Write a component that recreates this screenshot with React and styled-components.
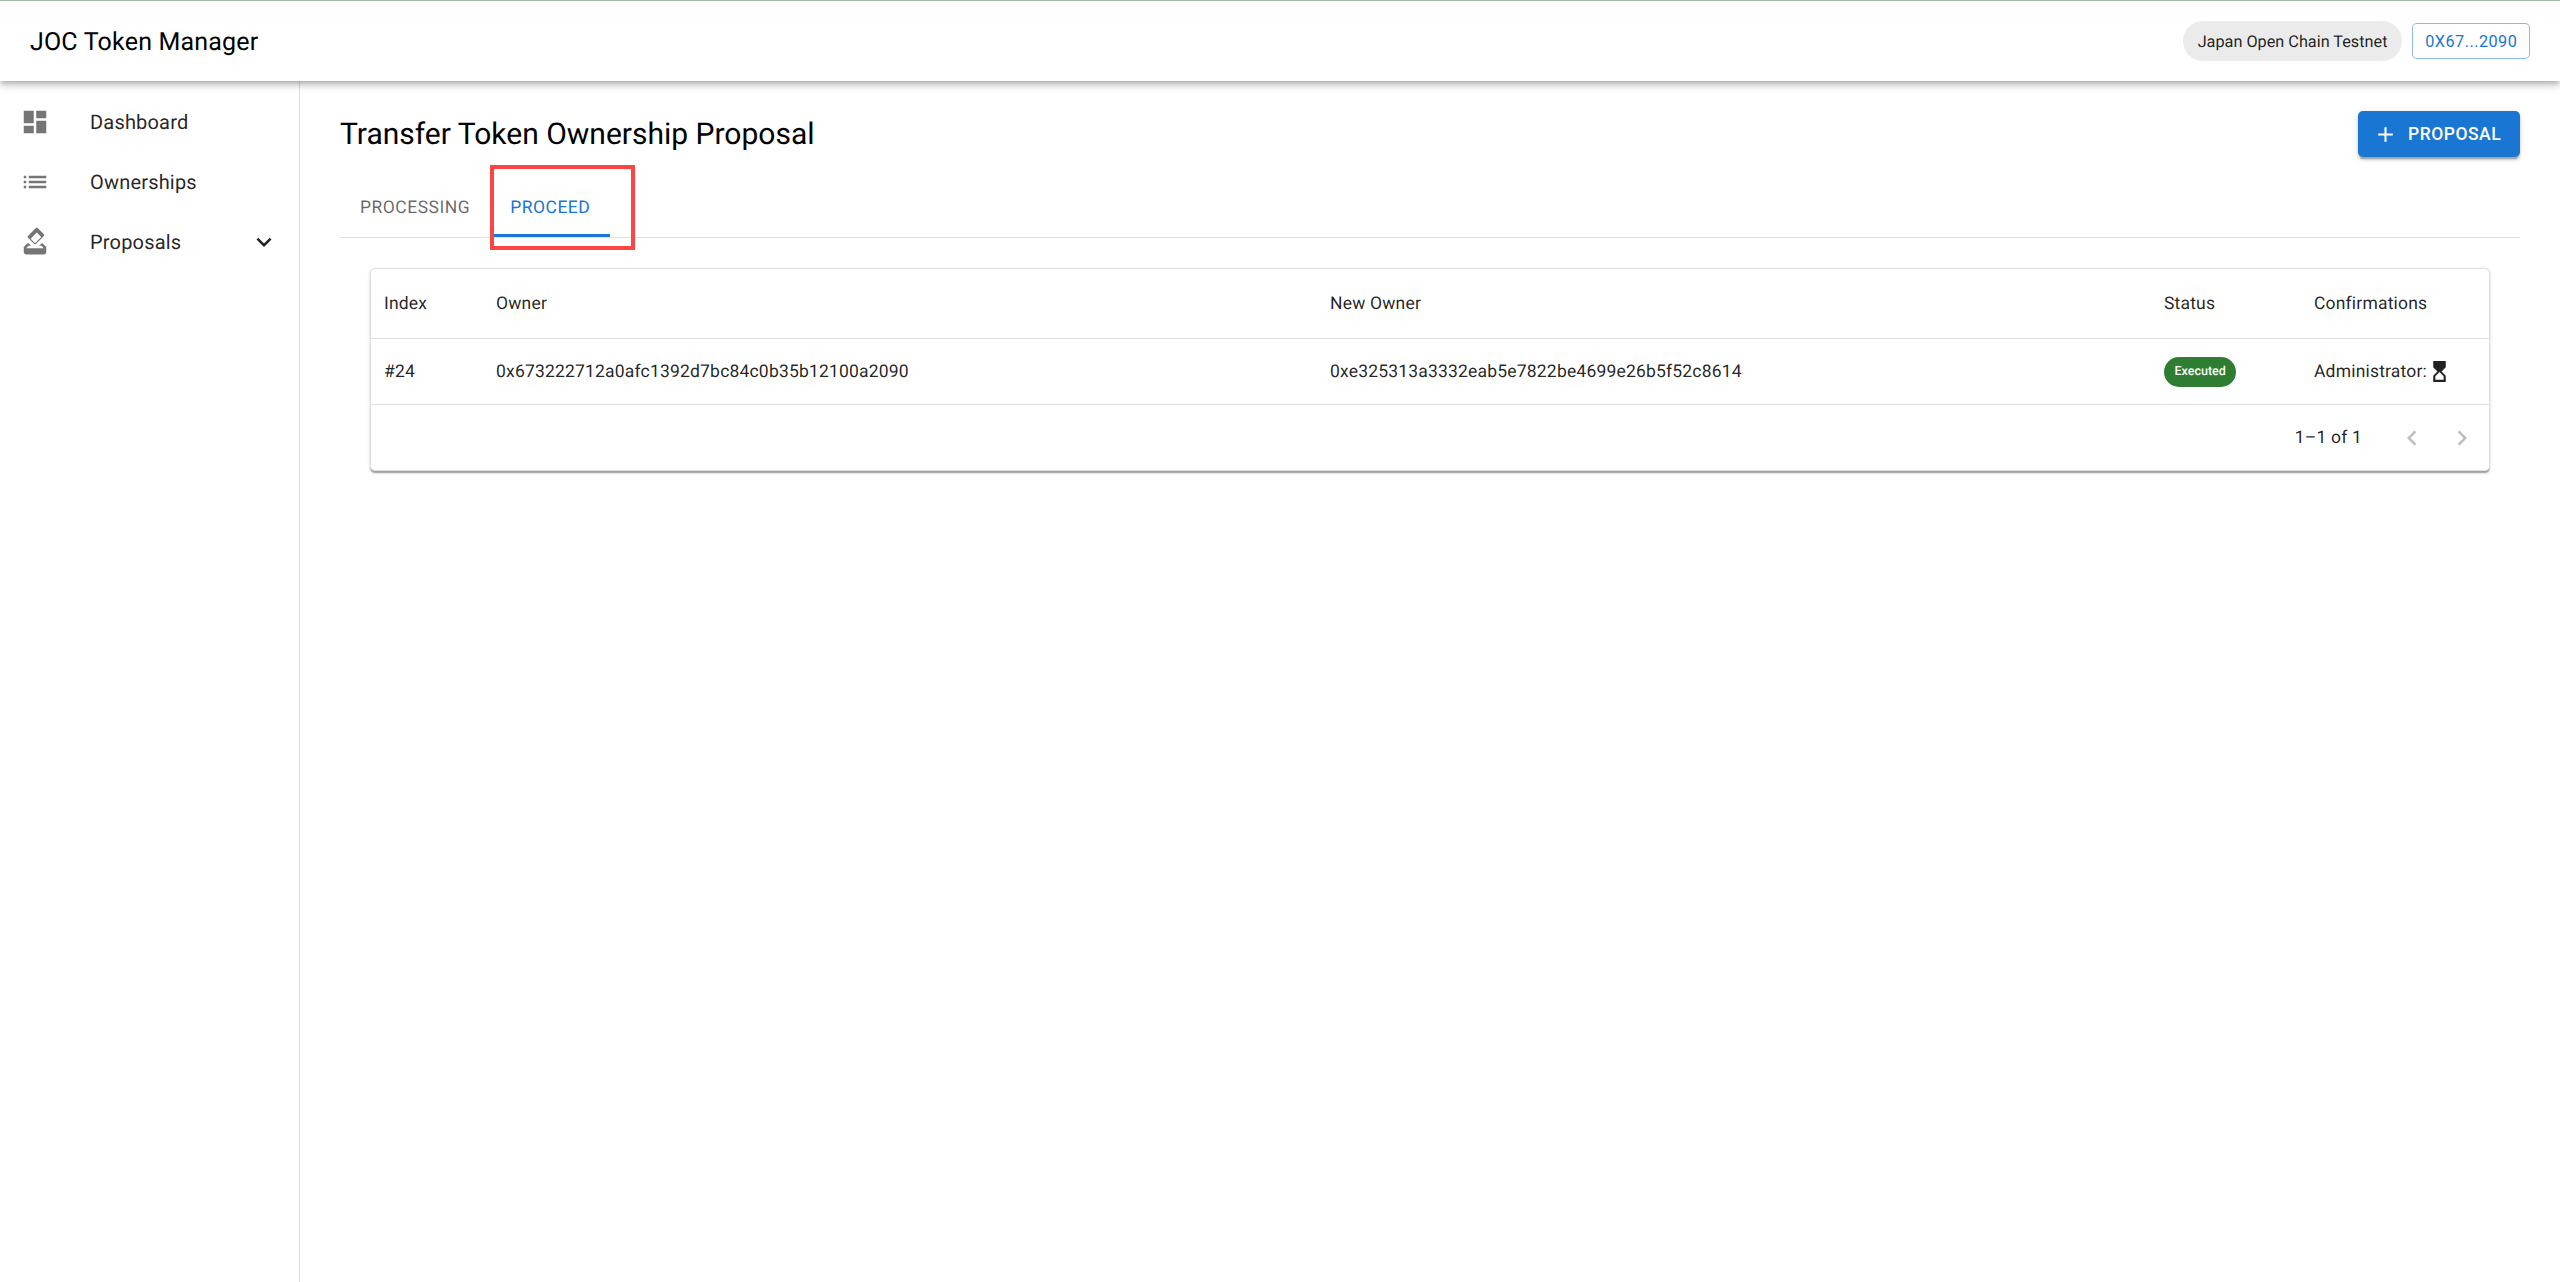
import React from "react";
import styled, { createGlobalStyle } from "styled-components";

const Global = createGlobalStyle`
  html, body { margin: 0; padding: 0; background: #fff; height: 100%; }
  body { font-family: Roboto, "Liberation Sans", sans-serif; color: rgba(0,0,0,.87); text-rendering: geometricPrecision; }
  #root { height: 1282px; overflow: hidden; }
`;

const Page = styled.div`
  display: flex;
  flex-direction: column;
  height: 1282px;
`;
const TopBar = styled.header`
  position: relative;
  z-index: 2;
  height: 81px;
  box-sizing: border-box;
  border-top: 1px solid #a3bda3;
  padding: 0 30px;
  display: flex;
  align-items: center;
  justify-content: space-between;
  background: #fff;
  box-shadow: 0 2.5px 5px -1.25px rgba(0,0,0,.2), 0 5px 6px 0 rgba(0,0,0,.14), 0 1.25px 12px 0 rgba(0,0,0,.12);
`;
const AppTitle = styled.h1`
  margin: 2px 0 0;
  font-size: 25px;
  font-weight: 400;
  letter-spacing: .1875px;
  color: #000;
`;
const TopActions = styled.div`
  display: flex;
  align-items: center;
  gap: 10px;
`;
const NetworkChip = styled.div`
  height: 40px;
  padding: 0 15px;
  border-radius: 20px;
  background: #ebebeb;
  display: flex;
  align-items: center;
  font-size: 16.25px;
`;
const WalletButton = styled.button`
  height: 36px;
  padding: 0 11.75px;
  background: #fff;
  border: 1px solid rgba(25,118,210,.5);
  border-radius: 5px;
  color: #1976d2;
  font: 400 16.25px Roboto, sans-serif;
  letter-spacing: .46px;
  text-transform: uppercase;
`;
const Body = styled.div`
  flex: 1;
  display: flex;
  min-height: 0;
`;
const Sidebar = styled.nav`
  width: 300px;
  box-sizing: border-box;
  border-right: 1px solid #dedede;
  padding-top: 11px;
  flex: none;
`;
const NavItem = styled.div`
  height: 60px;
  padding: 0 20px;
  display: flex;
  align-items: center;
  font-size: 20px;
  letter-spacing: .1875px;
`;
const NavIcon = styled.svg`
  width: 30px;
  height: 30px;
  flex: none;
  margin-right: 40px;
  fill: rgba(0,0,0,.54);
`;
const NavLabel = styled.span`
  flex: 1;
`;
const Chevron = styled.svg`
  width: 30px;
  height: 30px;
  fill: rgba(0,0,0,.87);
`;
const Main = styled.main`
  flex: 1;
  min-width: 0;
  padding: 30px 40px 0;
`;
const HeadRow = styled.div`
  display: flex;
  align-items: center;
  justify-content: space-between;
  height: 46px;
`;
const PageTitle = styled.h2`
  margin: 0;
  font-size: 30px;
  font-weight: 400;
  color: #000;
`;
const PrimaryButton = styled.button`
  height: 46px;
  width: 162px;
  padding: 0 15px;
  border: 0;
  border-radius: 5px;
  background: #1976d2;
  color: #fff;
  display: flex;
  align-items: center;
  font: 500 17.5px Roboto, sans-serif;
  letter-spacing: .5px;
  box-shadow: 0 3.75px 1.25px -2.5px rgba(0,0,0,.2), 0 2.5px 2.5px 0 rgba(0,0,0,.14), 0 1.25px 6px 0 rgba(0,0,0,.12);
`;
const PlusIcon = styled.svg`
  width: 25px;
  height: 25px;
  margin-right: 10px;
  fill: #fff;
  flex: none;
`;
const TabBar = styled.div`
  position: relative;
  margin-top: 21px;
  height: 60px;
  display: flex;
  border-bottom: 1px solid #e0e0e0;
  box-sizing: border-box;
`;
const Tab = styled.div`
  position: relative;
  padding: 0 20px;
  display: flex;
  align-items: center;
  font-size: 17.5px;
  font-weight: 400;
  letter-spacing: .5px;
  color: ${p => (p.$active ? "#1976d2" : "rgba(0,0,0,.6)")};
`;
const TabIndicator = styled.div`
  position: absolute;
  left: 4px;
  right: 0;
  bottom: 0;
  height: 3px;
  background: #1976d2;
`;
const RedMark = styled.div`
  position: absolute;
  left: 150px;
  top: -13px;
  width: 145px;
  height: 85px;
  box-sizing: border-box;
  border: 4px solid #ff4444;
  pointer-events: none;
`;
const Card = styled.section`
  margin: 30px 30px 0;
  border: 1px solid #e0e0e0;
  border-radius: 5px;
  background: #fff;
  box-shadow: 0 2.5px 1.25px -1.25px rgba(0,0,0,.2), 0 1.25px 1.25px 0 rgba(0,0,0,.14), 0 1.25px 3.75px 0 rgba(0,0,0,.12);
  font-size: 17.5px;
  letter-spacing: .1875px;
`;
const GridRow = styled.div`
  display: grid;
  grid-template-columns: 112px 834px 834px 150px 1fr;
  align-items: center;
  padding-left: 13px;
  height: ${p => p.$h}px;
  border-bottom: 1px solid #e0e0e0;
  box-sizing: border-box;
`;
const StatusChip = styled.span`
  display: inline-flex;
  align-items: center;
  height: 30px;
  padding: 0 10.5px;
  border-radius: 15px;
  background: #2e7d32;
  color: #fff;
  font-size: 12.5px;
  font-weight: 500;
  letter-spacing: 0;
`;
const ConfirmCell = styled.div`
  display: flex;
  align-items: center;
`;
const Hourglass = styled.svg`
  width: 25px;
  height: 25px;
  fill: rgba(0,0,0,.87);
`;
const Pager = styled.footer`
  height: 65px;
  display: flex;
  align-items: center;
  justify-content: flex-end;
  padding-right: 12px;
`;
const PagerText = styled.span`
  margin-right: 35px;
`;
const PagerButton = styled.span`
  width: 30px;
  height: 30px;
  display: flex;
  & + & { margin-left: 20px; }
`;
const PagerIcon = styled.svg`
  width: 30px;
  height: 30px;
  fill: rgba(0,0,0,.26);
`;

export default function App() {
  return (
    <Page>
      <Global />
      <TopBar>
        <AppTitle>JOC Token Manager</AppTitle>
        <TopActions>
          <NetworkChip>Japan Open Chain Testnet</NetworkChip>
          <WalletButton>0x67...2090</WalletButton>
        </TopActions>
      </TopBar>
      <Body>
        <Sidebar>
          <NavItem>
            <NavIcon viewBox="0 0 24 24"><path d="M3 13h8V3H3v10zm0 8h8v-6H3v6zm10 0h8V11h-8v10zm0-18v6h8V3h-8z" /></NavIcon>
            <NavLabel>Dashboard</NavLabel>
          </NavItem>
          <NavItem>
            <NavIcon viewBox="0 0 24 24"><path d="M3 13h2v-2H3v2zm0 4h2v-2H3v2zm0-8h2V7H3v2zm4 4h14v-2H7v2zm0 4h14v-2H7v2zM7 7v2h14V7H7z" /></NavIcon>
            <NavLabel>Ownerships</NavLabel>
          </NavItem>
          <NavItem>
            <NavIcon viewBox="0 0 24 24"><path d="M18 13h-.68l-2 2h1.91L19 17H5l1.78-2h2.05l-2-2H6l-3 3v4c0 1.1.89 2 1.99 2H19c1.1 0 2-.89 2-2v-4l-3-3zm-1-5.05l-4.95 4.95-3.54-3.54 4.95-4.95L17 7.95zm-4.24-7.07L6.39 7.25c-.39.39-.39 1.02 0 1.41l4.95 4.95c.39.39 1.02.39 1.41 0l6.36-6.36c.39-.39.39-1.02 0-1.41L14.16.89c-.38-.39-1.01-.39-1.4-.01z" /></NavIcon>
            <NavLabel>Proposals</NavLabel>
            <Chevron viewBox="0 0 24 24"><path d="M16.59 8.59 12 13.17 7.41 8.59 6 10l6 6 6-6z" /></Chevron>
          </NavItem>
        </Sidebar>
        <Main>
          <HeadRow>
            <PageTitle>Transfer Token Ownership Proposal</PageTitle>
            <PrimaryButton>
              <PlusIcon viewBox="0 0 24 24"><path d="M19 13h-6v6h-2v-6H5v-2h6V5h2v6h6v2z" /></PlusIcon>
              PROPOSAL
            </PrimaryButton>
          </HeadRow>
          <TabBar>
            <Tab>PROCESSING</Tab>
            <Tab $active>PROCEED<TabIndicator /></Tab>
            <RedMark />
          </TabBar>
          <Card>
            <GridRow $h={70}>
              <span>Index</span><span>Owner</span><span>New Owner</span><span>Status</span><span>Confirmations</span>
            </GridRow>
            <GridRow $h={66}>
              <span>#24</span>
              <span>0x673222712a0afc1392d7bc84c0b35b12100a2090</span>
              <span>0xe325313a3332eab5e7822be4699e26b5f52c8614</span>
              <span><StatusChip>Executed</StatusChip></span>
              <ConfirmCell>
                Administrator:
                <Hourglass viewBox="0 0 24 24"><path d="M6 2l.01 6L10 12l-3.99 4.01L6 22h12v-6l-4-4 4-3.99V2H6zm10 14.5V20H8v-3.5l4-4 4 4z" /></Hourglass>
              </ConfirmCell>
            </GridRow>
            <Pager>
              <PagerText>1–1 of 1</PagerText>
              <PagerButton><PagerIcon viewBox="0 0 24 24"><path d="M15.41 7.41 14 6l-6 6 6 6 1.41-1.41L10.83 12z" /></PagerIcon></PagerButton>
              <PagerButton><PagerIcon viewBox="0 0 24 24"><path d="M10 6 8.59 7.41 13.17 12l-4.58 4.59L10 18l6-6z" /></PagerIcon></PagerButton>
            </Pager>
          </Card>
        </Main>
      </Body>
    </Page>
  );
}
